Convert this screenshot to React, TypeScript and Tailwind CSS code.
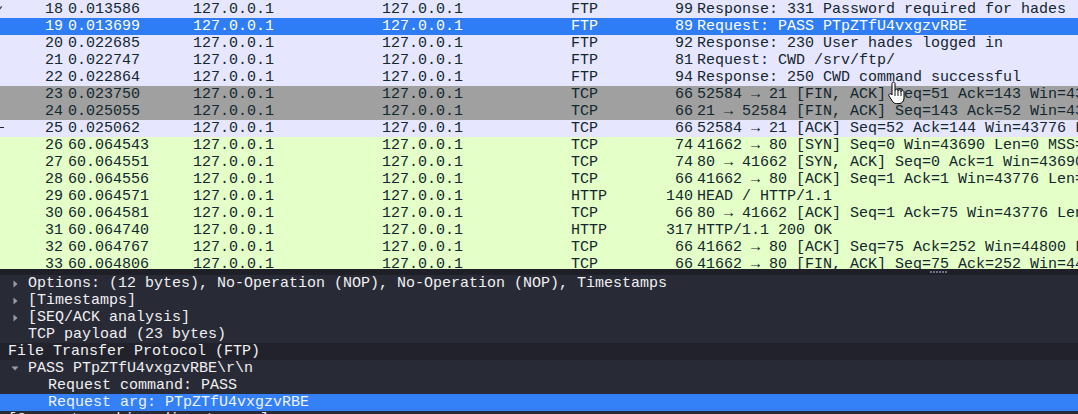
import React from "react";

type Row = { no: number; time: string; proto: string; len: number; info: string; bg: string; sel?: boolean; mark?: "tick" | "dash" };

const LAV = "bg-[#e7e6ff]";
const GRAY = "bg-[#a0a0a0]";
const GREEN = "bg-[#e4ffc7]";

const rows: Row[] = [
  { no: 18, time: "0.013586", proto: "FTP", len: 99, info: "Response: 331 Password required for hades", bg: LAV, mark: "tick" },
  { no: 19, time: "0.013699", proto: "FTP", len: 89, info: "Request: PASS PTpZTfU4vxgzvRBE", bg: "bg-[#2e7cf6]", sel: true },
  { no: 20, time: "0.022685", proto: "FTP", len: 92, info: "Response: 230 User hades logged in", bg: LAV },
  { no: 21, time: "0.022747", proto: "FTP", len: 81, info: "Request: CWD /srv/ftp/", bg: LAV },
  { no: 22, time: "0.022864", proto: "FTP", len: 94, info: "Response: 250 CWD command successful", bg: LAV },
  { no: 23, time: "0.023750", proto: "TCP", len: 66, info: "52584 \u2192 21 [FIN, ACK] Seq=51 Ack=143 Win=43776 Len=0 TSval=1", bg: GRAY },
  { no: 24, time: "0.025055", proto: "TCP", len: 66, info: "21 \u2192 52584 [FIN, ACK] Seq=143 Ack=52 Win=43776 Len=0 TSval=1", bg: GRAY },
  { no: 25, time: "0.025062", proto: "TCP", len: 66, info: "52584 \u2192 21 [ACK] Seq=52 Ack=144 Win=43776 Len=0 TSval=1", bg: LAV, mark: "dash" },
  { no: 26, time: "60.064543", proto: "TCP", len: 74, info: "41662 \u2192 80 [SYN] Seq=0 Win=43690 Len=0 MSS=65495 SACK_PERM", bg: GREEN },
  { no: 27, time: "60.064551", proto: "TCP", len: 74, info: "80 \u2192 41662 [SYN, ACK] Seq=0 Ack=1 Win=43690 Len=0 MSS=65495", bg: GREEN },
  { no: 28, time: "60.064556", proto: "TCP", len: 66, info: "41662 \u2192 80 [ACK] Seq=1 Ack=1 Win=43776 Len=0 TSval=1", bg: GREEN },
  { no: 29, time: "60.064571", proto: "HTTP", len: 140, info: "HEAD / HTTP/1.1", bg: GREEN },
  { no: 30, time: "60.064581", proto: "TCP", len: 66, info: "80 \u2192 41662 [ACK] Seq=1 Ack=75 Win=43776 Len=0 TSval=1", bg: GREEN },
  { no: 31, time: "60.064740", proto: "HTTP", len: 317, info: "HTTP/1.1 200 OK", bg: GREEN },
  { no: 32, time: "60.064767", proto: "TCP", len: 66, info: "41662 \u2192 80 [ACK] Seq=75 Ack=252 Win=44800 Len=0 TSval=1", bg: GREEN },
  { no: 33, time: "60.064806", proto: "TCP", len: 66, info: "41662 \u2192 80 [FIN, ACK] Seq=75 Ack=252 Win=44800 Len=0", bg: GREEN },
];

type TreeRow = { text: string; level: number; arrow?: "right" | "down"; sel?: boolean; dark?: boolean };

const tree: TreeRow[] = [
  { text: "Options: (12 bytes), No-Operation (NOP), No-Operation (NOP), Timestamps", level: 1, arrow: "right" },
  { text: "[Timestamps]", level: 1, arrow: "right" },
  { text: "[SEQ/ACK analysis]", level: 1, arrow: "right" },
  { text: "TCP payload (23 bytes)", level: 1 },
  { text: "File Transfer Protocol (FTP)", level: 0, dark: true },
  { text: "PASS PTpZTfU4vxgzvRBE\\r\\n", level: 1, arrow: "down" },
  { text: "Request command: PASS", level: 2 },
  { text: "Request arg: PTpZTfU4vxgzvRBE", level: 2, sel: true },
  { text: "[Current working directory: ]", level: 0 },
];

function Arrow({ dir }: { dir: "right" | "down" }) {
  if (dir === "right")
    return (
      <svg width="5" height="8" viewBox="0 0 5 8" className="ml-[13px] block">
        <path d="M0.5 0.5 L4.5 4 L0.5 7.5 Z" fill="#9a9caa" />
      </svg>
    );
  return (
    <svg width="8" height="5" viewBox="0 0 8 5" className="ml-[11px] block">
      <path d="M0.5 0.5 L7.5 0.5 L4 4.5 Z" fill="#9a9caa" />
    </svg>
  );
}

function HandCursor() {
  return (
    <svg width="20" height="24" viewBox="0 0 20 24">
      <path
        d="M6.5 1 C7.3 1 8 1.7 8 2.5 V9.6 C8 8.8 8.7 8.2 9.5 8.2 C10.3 8.2 11 8.8 11 9.6 V10.2 C11 9.4 11.7 8.8 12.5 8.8 C13.3 8.8 14 9.4 14 10.2 V11 C14 10.2 14.7 9.6 15.5 9.6 C16.3 9.6 17 10.2 17 11 V17 C17 20.2 15 22.6 12 22.6 H9.6 C7.6 22.6 6.4 21.7 5.4 20.2 L2.1 15.1 C1.6 14.3 1.8 13.4 2.5 12.9 C3.2 12.5 4.1 12.7 4.6 13.4 L5 14 V2.5 C5 1.7 5.7 1 6.5 1 Z"
        fill="#ffffff"
        stroke="#000000"
        strokeWidth="1"
        strokeLinejoin="round"
      />
      <path d="M8 9.6 V15 M11 10.2 V15 M14 11 V15" stroke="#000000" strokeWidth="0.9" />
    </svg>
  );
}

export default function App() {
  return (
    <div className="relative w-[1078px] h-[414px] overflow-hidden bg-[#282a36] font-['Liberation_Mono',monospace] text-[15px] leading-[17px]">
      {/* packet list */}
      <div className="h-[269px] overflow-hidden bg-[#e4ffc7] text-[#12272e]">
        <div className="h-[1px] bg-[#e7e6ff]" />
        {rows.map((r) => (
          <div
            key={r.no}
            className={`flex h-[17px] whitespace-pre ${r.bg} ${r.sel ? "text-white" : "text-[#12272e]"}`}
          >
            <div className="relative w-[66px] shrink-0 pr-[3px] text-right">
              {r.mark === "tick" && (
                <span className="absolute left-0 top-[5px] h-[4px] w-[1px] rotate-[35deg] bg-[#12272e]" />
              )}
              {r.mark === "dash" && <span className="absolute left-0 top-[7px] h-[1px] w-[4px] bg-[#12272e]" />}
              {r.no}
            </div>
            <div className="w-[125px] shrink-0 pl-[2px]">{r.time}</div>
            <div className="w-[189px] shrink-0 pl-[2px]">127.0.0.1</div>
            <div className="w-[189px] shrink-0 pl-[2px]">127.0.0.1</div>
            <div className="w-[71px] shrink-0 pl-[2px]">{r.proto}</div>
            <div className="w-[55px] shrink-0 pr-[2px] text-right">{r.len}</div>
            <div className="flex-1 min-w-0 overflow-hidden pl-[2px]">{r.info}</div>
          </div>
        ))}
      </div>

      {/* splitter */}
      <div className="h-[6px] bg-[#1e1f27] pl-[930px] pt-[2px]">
        <div className="flex gap-[1px]">
          {[0, 1, 2, 3, 4, 5].map((i) => (
            <span key={i} className="h-[2px] w-[2px] bg-[#6e7283]" />
          ))}
        </div>
      </div>

      {/* details tree */}
      <div className="h-[139px] overflow-hidden bg-[#282a36] text-[#f0f0f2]">
        {tree.map((t, i) => (
          <div
            key={i}
            className={`flex h-[17px] items-center whitespace-pre ${t.sel ? "bg-[#3480f7] text-[#eef3ff]" : t.dark ? "bg-[#21222c]" : ""}`}
          >
            <div
              className={`flex shrink-0 items-center justify-start ${
                t.level === 0 ? "w-[8px]" : t.level === 1 ? "w-[28px]" : "w-[48px]"
              }`}
            >
              {t.arrow && <Arrow dir={t.arrow} />}
            </div>
            <span>{t.text}</span>
          </div>
        ))}
      </div>

      {/* mouse cursor */}
      <div className="absolute left-[887px] top-[81px]">
        <HandCursor />
      </div>
    </div>
  );
}
